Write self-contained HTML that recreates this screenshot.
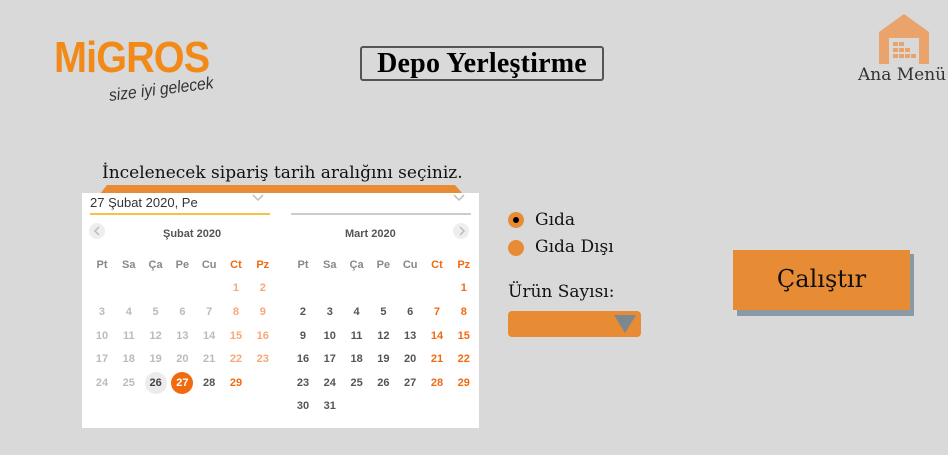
<!DOCTYPE html>
<html><head><meta charset="utf-8"><style>
body{margin:0;width:948px;height:455px;background:#d9d9d9;position:relative;overflow:hidden;font-family:"DejaVu Serif","Liberation Serif",serif}
.a{position:absolute}
.cal{font-family:"Liberation Sans",sans-serif;font-weight:bold;font-size:11px}
.g{position:absolute;display:grid;grid-template-columns:repeat(7,26.8px);grid-auto-rows:23.6px;align-items:center;justify-items:center}
.g span{width:22px;height:22px;line-height:22px;text-align:center;border-radius:50%}
.h{color:#888}.hw{color:#f26a10}
.d{color:#bbb}.dw{color:#f7a877}
.n{color:#555}.w{color:#f26a10}
.sel{background:#f26a10;color:#fff}.today{background:#ececec;color:#444}
</style></head><body>
<div class="a" style="left:54px;top:33px;font-family:'Liberation Sans',sans-serif;font-weight:bold;font-size:44px;color:#f28a1a;letter-spacing:-1px;transform:scaleX(0.9);transform-origin:left">MiGROS</div>
<div class="a" style="left:109px;top:86px;font-family:'Liberation Sans',sans-serif;font-style:italic;font-size:17px;color:#333;transform:rotate(-7deg) scaleX(0.92);transform-origin:left">size iyi gelecek</div>

<div class="a" style="left:360px;top:46px;width:240px;height:31px;border:2px solid #555;border-radius:3px;text-align:center;line-height:31px;font-family:'Liberation Serif',serif;font-weight:bold;font-size:28px;color:#000;letter-spacing:0.2px">Depo Yerleştirme</div>

<svg class="a" style="left:877px;top:12px" width="54" height="52"><path d="M2 20 L27 2 L52 20 L52 52 L42 52 L42 26 L12 26 L12 52 L2 52 Z" fill="#eba36c"/><g fill="#eba36c"><rect x="16" y="30" width="5" height="4"/><rect x="22" y="30" width="5" height="4"/><rect x="16" y="36" width="5" height="4"/><rect x="22" y="36" width="5" height="4"/><rect x="28" y="36" width="5" height="4"/><rect x="16" y="42" width="5" height="4"/><rect x="22" y="42" width="5" height="4"/><rect x="28" y="42" width="5" height="4"/><rect x="34" y="42" width="5" height="4"/></g></svg>
<div class="a" style="left:858px;top:65px;font-size:17px;color:#333">Ana Menü</div>

<div class="a" style="left:102px;top:163px;font-size:17px;color:#111">İncelenecek sipariş tarih aralığını seçiniz.</div>
<svg class="a" style="left:95px;top:184px" width="375" height="10"><path d="M5 10 L12 1 L360 1 L368 10 Z" fill="#e88b35"/></svg>
<div class="a" style="left:82px;top:193px;width:397px;height:235px;background:#fff"></div>
<div class="a cal" style="left:90px;top:195px;font-size:13px;font-weight:normal;color:#333">27 Şubat 2020, Pe</div>
<div class="a" style="left:90px;top:213px;width:180px;height:2px;background:#f5c242"></div>
<div class="a" style="left:291px;top:213px;width:180px;height:2px;background:#ccc"></div>
<svg class="a" style="left:252px;top:194px" width="12" height="8"><path d="M1 1 L6 6 L11 1" stroke="#bbb" stroke-width="1.5" fill="none"/></svg>
<svg class="a" style="left:453px;top:194px" width="12" height="8"><path d="M1 1 L6 6 L11 1" stroke="#bbb" stroke-width="1.5" fill="none"/></svg>
<div class="a" style="left:89px;top:223px;width:16px;height:16px;border-radius:50%;background:#eee"></div>
<svg class="a" style="left:93px;top:226px" width="8" height="10"><path d="M6 1 L2 5 L6 9" stroke="#bbb" stroke-width="1.5" fill="none"/></svg>
<div class="a" style="left:453px;top:223px;width:16px;height:16px;border-radius:50%;background:#eee"></div>
<svg class="a" style="left:458px;top:226px" width="8" height="10"><path d="M2 1 L6 5 L2 9" stroke="#bbb" stroke-width="1.5" fill="none"/></svg>
<div class="a cal" style="left:163px;top:228px;color:#555">Şubat 2020</div>
<div class="a cal" style="left:345px;top:228px;color:#555">Mart 2020</div>

<div class="g cal" style="left:88.6px;top:253px">
<span class="h">Pt</span><span class="h">Sa</span><span class="h">Ça</span><span class="h">Pe</span><span class="h">Cu</span><span class="hw">Ct</span><span class="hw">Pz</span>
<span></span><span></span><span></span><span></span><span></span><span class="dw">1</span><span class="dw">2</span>
<span class="d">3</span><span class="d">4</span><span class="d">5</span><span class="d">6</span><span class="d">7</span><span class="dw">8</span><span class="dw">9</span>
<span class="d">10</span><span class="d">11</span><span class="d">12</span><span class="d">13</span><span class="d">14</span><span class="dw">15</span><span class="dw">16</span>
<span class="d">17</span><span class="d">18</span><span class="d">19</span><span class="d">20</span><span class="d">21</span><span class="dw">22</span><span class="dw">23</span>
<span class="d">24</span><span class="d">25</span><span class="today">26</span><span class="sel">27</span><span class="n">28</span><span class="w">29</span><span></span>
</div>
<div class="g cal" style="left:289.6px;top:253px">
<span class="h">Pt</span><span class="h">Sa</span><span class="h">Ça</span><span class="h">Pe</span><span class="h">Cu</span><span class="hw">Ct</span><span class="hw">Pz</span>
<span></span><span></span><span></span><span></span><span></span><span></span><span class="w">1</span>
<span class="n">2</span><span class="n">3</span><span class="n">4</span><span class="n">5</span><span class="n">6</span><span class="w">7</span><span class="w">8</span>
<span class="n">9</span><span class="n">10</span><span class="n">11</span><span class="n">12</span><span class="n">13</span><span class="w">14</span><span class="w">15</span>
<span class="n">16</span><span class="n">17</span><span class="n">18</span><span class="n">19</span><span class="n">20</span><span class="w">21</span><span class="w">22</span>
<span class="n">23</span><span class="n">24</span><span class="n">25</span><span class="n">26</span><span class="n">27</span><span class="w">28</span><span class="w">29</span>
<span class="n">30</span><span class="n">31</span>
</div>

<div class="a" style="left:508px;top:212px;width:16px;height:16px;border-radius:50%;background:#e88b35"></div>
<div class="a" style="left:513px;top:217px;width:6px;height:6px;border-radius:50%;background:#000"></div>
<div class="a" style="left:535px;top:210px;font-size:17px;color:#111">Gıda</div>
<div class="a" style="left:508px;top:240px;width:16px;height:16px;border-radius:50%;background:#e88b35"></div>
<div class="a" style="left:535px;top:237px;font-size:17px;color:#111">Gıda Dışı</div>
<div class="a" style="left:508px;top:282px;font-size:17px;color:#111">Ürün Sayısı:</div>
<div class="a" style="left:508px;top:311px;width:133px;height:26px;border-radius:4px;background:#e88b35"></div>
<svg class="a" style="left:613px;top:314px" width="24" height="20"><path d="M1 1 L23 1 L12 19 Z" fill="#7a8890"/></svg>

<div class="a" style="left:737px;top:254px;width:177px;height:62px;background:#8a9aa5"></div>
<div class="a" style="left:733px;top:250px;width:177px;height:60px;background:#e88b35;text-align:center;line-height:58px;font-size:24px;color:#111">Çalıştır</div>
</body></html>
